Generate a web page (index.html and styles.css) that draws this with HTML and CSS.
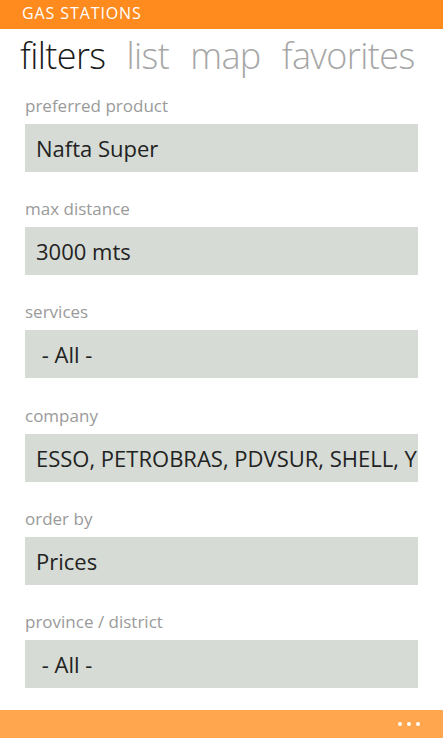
FILE: index.html
```html
<!DOCTYPE html>
<html lang="en">
<head>
  <meta charset="UTF-8">
  <meta name="viewport" content="width=device-width, initial-scale=1.0">
  <title>Gas Stations</title>
  <link rel="stylesheet" href="styles.css">
</head>
<body>
  <div class="app">
    <header class="title-bar">GAS STATIONS</header>

    <nav class="pivot">
      <span class="pivot-item active">filters</span>
      <span class="pivot-item">list</span>
      <span class="pivot-item">map</span>
      <span class="pivot-item">favorites</span>
    </nav>

    <main class="filters">
      <div class="field">
        <label class="field-label">preferred product</label>
        <div class="field-box">Nafta Super</div>
      </div>
      <div class="field">
        <label class="field-label">max distance</label>
        <div class="field-box">3000 mts</div>
      </div>
      <div class="field">
        <label class="field-label">services</label>
        <div class="field-box">&nbsp;- All -</div>
      </div>
      <div class="field">
        <label class="field-label">company</label>
        <div class="field-box">ESSO, PETROBRAS, PDVSUR, SHELL, YPF</div>
      </div>
      <div class="field">
        <label class="field-label">order by</label>
        <div class="field-box">Prices</div>
      </div>
      <div class="field">
        <label class="field-label">province / district</label>
        <div class="field-box">&nbsp;- All -</div>
      </div>
    </main>

    <footer class="app-bar">
      <div class="more">
        <span class="dot"></span>
        <span class="dot"></span>
        <span class="dot"></span>
      </div>
    </footer>
  </div>
</body>
</html>
```

FILE: styles.css
```css
* {
  margin: 0;
  padding: 0;
  box-sizing: border-box;
  font-family: 'Open Sans', 'Noto Sans', sans-serif;
}

body {
  background: #fff;
  overflow: hidden;
}

.app {
  display: flex;
  flex-direction: column;
  height: 100vh;
}

.title-bar {
  height: 29px;
  line-height: 26px;
  padding-left: 22px;
  background: #ff8a1e;
  color: #fff;
  font-size: 16px;
  letter-spacing: 0.9px;
}

.pivot {
  display: flex;
  gap: 21px;
  margin-top: 2px;
  padding-left: 20px;
  height: 50px;
  line-height: 50px;
  font-size: 36px;
  font-weight: 300;
  letter-spacing: -0.6px;
  white-space: nowrap;
}

.pivot-item {
  color: #a6a6a6;
}

.pivot-item.active {
  color: #1a1a1a;
}

.filters {
  flex: 1;
  display: flex;
  flex-direction: column;
  gap: 25.2px;
  padding: 13px 25px 0;
}

.field {
  display: flex;
  flex-direction: column;
}

.field-label {
  line-height: 24px;
  margin-bottom: 6px;
  font-size: 17px;
  color: #9a9a9a;
}

.field-box {
  height: 48px;
  line-height: 48px;
  padding-left: 11px;
  background: #d6dbd5;
  color: #222;
  font-size: 22px;
  white-space: nowrap;
  overflow: hidden;
}

.app-bar {
  height: 28px;
  background: #ffa64f;
  display: flex;
  justify-content: flex-end;
  align-items: center;
  padding-right: 23px;
}

.more {
  display: flex;
  gap: 5px;
}

.dot {
  width: 4px;
  height: 4px;
  border-radius: 50%;
  background: #fff;
}
```
